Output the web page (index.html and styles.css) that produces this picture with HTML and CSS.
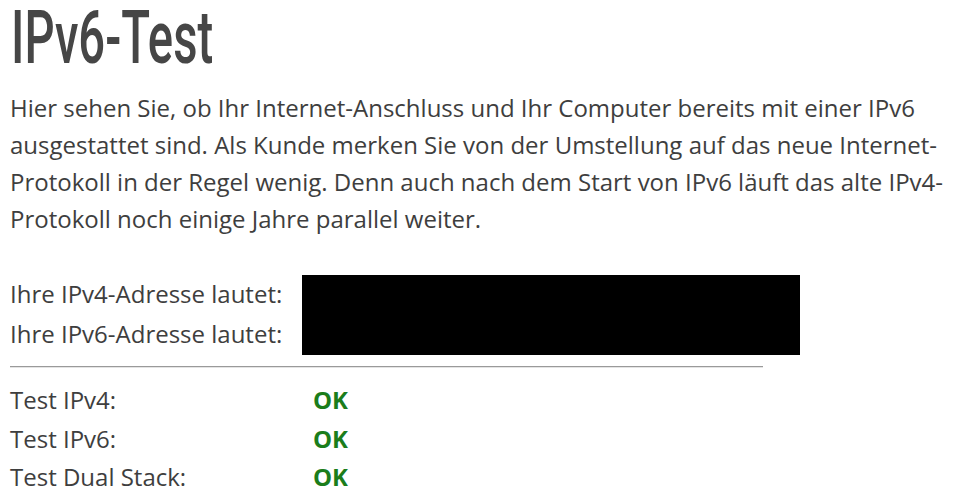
FILE: index.html
```html
<!DOCTYPE html>
<html lang="de">
<head>
<meta charset="utf-8">
<title>IPv6-Test</title>
<link rel="stylesheet" href="styles.css">
</head>
<body>
<main class="page">
  <h1 class="title"><span class="title-text">IPv6-Test</span></h1>
  <p class="intro">Hier sehen Sie, ob Ihr Internet-Anschluss und Ihr Computer bereits mit einer IPv6 ausgestattet sind. Als Kunde merken Sie von der Umstellung auf das neue Internet-Protokoll in der Regel wenig. Denn auch nach dem Start von IPv6 läuft das alte IPv4-Protokoll noch einige Jahre parallel weiter.</p>
  <div class="addresses">
    <div class="addr-label">Ihre IPv4-Adresse lautet:</div>
    <div class="addr-box"></div>
    <div class="addr-label">Ihre IPv6-Adresse lautet:</div>
  </div>
  <hr class="divider">
  <div class="tests">
    <div class="test-label">Test IPv4:</div><div class="test-ok">OK</div>
    <div class="test-label">Test IPv6:</div><div class="test-ok">OK</div>
    <div class="test-label">Test Dual Stack:</div><div class="test-ok">OK</div>
  </div>
</main>
</body>
</html>
```
FILE: styles.css
```css
html, body {
  margin: 0;
  padding: 0;
  background: #ffffff;
}
.page {
  padding: 0 10px;
  font-family: "Open Sans", "Noto Sans", sans-serif;
  font-size: 24px;
  color: #3e3e3e;
}
.title {
  margin: 0;
  height: 75px;
  font-family: Roboto, "Liberation Sans", sans-serif;
  font-weight: 500;
  font-size: 75px;
  line-height: 75px;
  color: #464646;
  white-space: nowrap;
}
.title-text {
  display: inline-block;
  transform: scaleX(0.63);
  transform-origin: 0 0;
  margin-left: 1px;
}
.intro {
  margin: 14px 0 0;
  line-height: 37px;
}
.addresses {
  margin-top: 38px;
  display: grid;
  grid-template-columns: 292px 498px;
  grid-template-rows: 40px 40px;
}
.addr-label {
  line-height: 38px;
  grid-column: 1;
  white-space: nowrap;
}
.addr-box {
  grid-column: 2;
  grid-row: 1 / span 2;
  background: #000;
}
.divider {
  margin: 11px 0 0;
  width: 753px;
  height: 0;
  border: 0;
  border-top: 1px solid #9a9a9a;
  border-bottom: 1px solid #e4e4e4;
}
.tests {
  margin-top: 13px;
  display: grid;
  grid-template-columns: 303px auto;
  grid-auto-rows: 38.5px;
  line-height: 38.5px;
}
.test-ok {
  font-weight: 700;
  color: #1b7d1b;
}
```
